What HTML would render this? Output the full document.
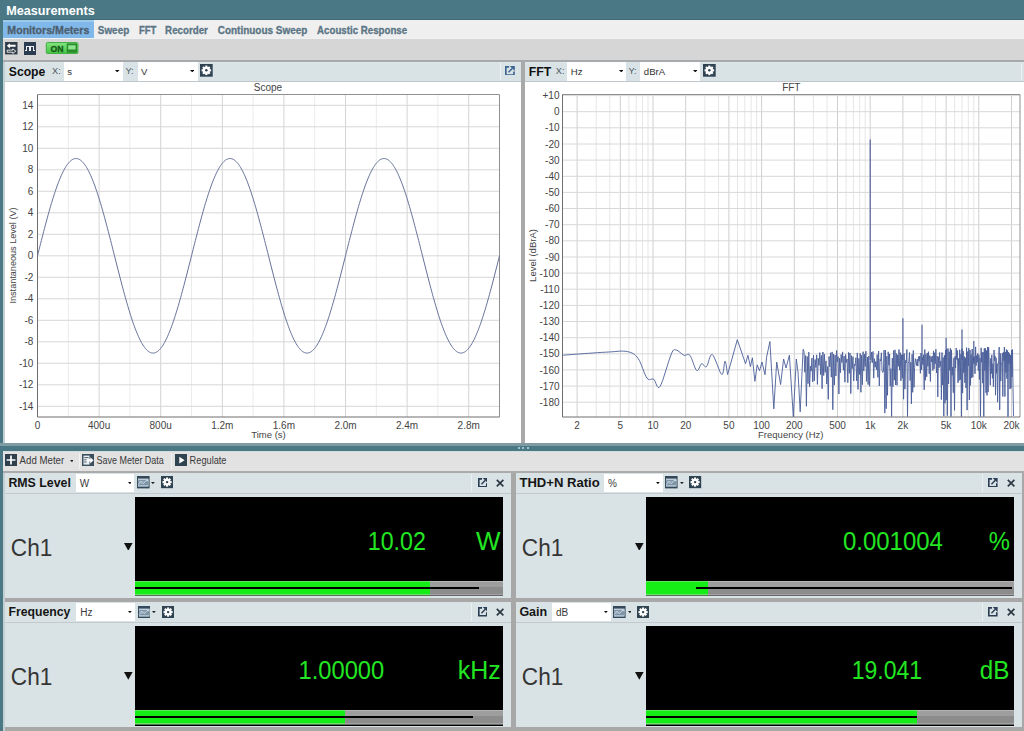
<!DOCTYPE html><html><head><meta charset="utf-8"><style>
*{margin:0;padding:0;box-sizing:border-box}
html,body{width:1024px;height:731px;overflow:hidden;background:#a8a8a8;font-family:"Liberation Sans",sans-serif}
.a{position:absolute}
svg text{font-family:"Liberation Sans",sans-serif}
</style></head><body>

<div class="a" style="left:0px;top:0px;width:1024px;height:20px;background:#4a7885"></div>
<div class="a" style="left:0px;top:18.8px;width:1024px;height:1px;background:#416a77"></div>
<div class="a" style="left:0px;top:0px;width:3px;height:731px;background:#4a7885"></div>
<div class="a" style="left:3px;top:20px;width:2px;height:711px;background:#c2cfd3"></div>
<div class="a" style="left:3px;top:20px;width:1021px;height:18px;background:#efefef"></div>
<div class="a" style="left:3px;top:20px;width:91px;height:18px;background:#80b9e9"></div>
<div class="a" style="left:3px;top:20px;width:91px;height:2px;background:#9ccaec"></div>
<div class="a" style="left:3px;top:37.6px;width:1021px;height:1.4px;background:#eef2f4"></div>
<div class="a" style="left:3px;top:39px;width:1021px;height:20.5px;background:#d6d6d6"></div>
<div class="a" style="left:3px;top:59.5px;width:1021px;height:2px;background:#a7aaad"></div>
<svg class="a" style="left:5.4px;top:42.4px" width="12.6" height="12.4" viewBox="0 0 13 13"><rect width="13" height="13" fill="#2f3c48"/>
<path d="M1.8 4 L5 1.3 V3 H11 V5 H5 V6.7 Z" fill="#fff"/><path d="M11.2 9.6 L8 7.2 V8.5 H2.2 V10.7 H8 V12 Z" fill="none" stroke="#fff" stroke-width="0.9"/></svg>
<svg class="a" style="left:24px;top:42px" width="12" height="13" viewBox="0 0 12 13" shape-rendering="crispEdges"><rect width="12" height="13" fill="#2c3d52"/>
<path d="M1 8.5 H2.5 V4.5 H5.5 V8.5 H6.5 V4.5 H9.5 V8.5 H11" fill="none" stroke="#f0f4f8" stroke-width="1"/></svg>
<svg class="a" style="left:45.3px;top:42.2px" width="34.2" height="12.1" viewBox="0 0 35 13"><defs><linearGradient id="gon" x1="0" y1="0" x2="0" y2="1"><stop offset="0" stop-color="#80e480"/><stop offset="1" stop-color="#46c446"/></linearGradient></defs>
<rect x="0.5" y="0.5" width="34" height="12" rx="1.5" fill="url(#gon)" stroke="#3aa83a"/>
<text x="5" y="10.4" font-weight="bold" font-size="9.8" fill="#175a17" stroke="#175a17" stroke-width="0.35" textLength="14" lengthAdjust="spacingAndGlyphs">ON</text>
<rect x="22.5" y="1.5" width="11" height="10" fill="#2a8c2a"/><rect x="24" y="3.5" width="8" height="4.5" fill="#8ee48e"/></svg>
<div class="a" style="left:5px;top:61.5px;width:515.5px;height:381.5px;background:#fff"></div>
<div class="a" style="left:5px;top:61.5px;width:515.5px;height:19.3px;background:#d9e3e5"></div>
<div class="a" style="left:5px;top:61.5px;width:515.5px;height:1px;background:#e0e7ea"></div>
<div class="a" style="left:5px;top:80.8px;width:515.5px;height:1.2px;background:#c0c6c9"></div>
<div class="a" style="left:63.7px;top:62px;width:59px;height:18.6px;background:#fff"></div>
<svg class="a" style="left:115.10000000000001px;top:70px" width="4.5" height="2.4" viewBox="0 0 4.5 2.4"><path d="M0 0H4.5L2.25 2.4Z" fill="#111"/></svg>
<div class="a" style="left:123.5px;top:62px;width:14px;height:18.6px;background:#d9e2e6"></div>
<div class="a" style="left:137.5px;top:62px;width:60px;height:18.6px;background:#fff"></div>
<svg class="a" style="left:189.9px;top:70px" width="4.5" height="2.4" viewBox="0 0 4.5 2.4"><path d="M0 0H4.5L2.25 2.4Z" fill="#111"/></svg>
<svg class="a" style="left:200.3px;top:64px" width="12.7" height="12.7" viewBox="0 0 12.7 12.7"><rect width="12.7" height="12.7" fill="#2f4351"/><rect x="5.28" y="1.56" width="2.15" height="9.57" fill="#fff" transform="rotate(0 6.35 6.35)"/><rect x="5.28" y="1.56" width="2.15" height="9.57" fill="#fff" transform="rotate(45 6.35 6.35)"/><rect x="5.28" y="1.56" width="2.15" height="9.57" fill="#fff" transform="rotate(90 6.35 6.35)"/><rect x="5.28" y="1.56" width="2.15" height="9.57" fill="#fff" transform="rotate(135 6.35 6.35)"/><circle cx="6.35" cy="6.35" r="3.61" fill="#fff"/><circle cx="6.35" cy="6.35" r="1.27" fill="#2f4351"/></svg>
<div class="a" style="left:500px;top:63px;width:1px;height:17px;background:#edf1f3"></div>
<svg class="a" style="left:505.3px;top:65.7px" width="9.8" height="9.8" viewBox="0 0 10 10"><path d="M4.2 0.85H0.85V9.15H9.15V5.6" fill="none" stroke="#3d6591" stroke-width="1.7"/><path d="M3.6 6.4L7.6 2.4" fill="none" stroke="#3d6591" stroke-width="1.5"/><path d="M4.9 0H10V5.1Z" fill="#3d6591"/></svg>
<div class="a" style="left:520.5px;top:61.5px;width:4.5px;height:381.5px;background:#a9a9a9"></div>
<div class="a" style="left:525px;top:61.5px;width:499px;height:381.5px;background:#fff"></div>
<div class="a" style="left:525px;top:61.5px;width:499px;height:19.3px;background:#d9e3e5"></div>
<div class="a" style="left:525px;top:61.5px;width:499px;height:1px;background:#e0e7ea"></div>
<div class="a" style="left:525px;top:80.8px;width:499px;height:1.2px;background:#c0c6c9"></div>
<div class="a" style="left:567.3px;top:62px;width:59px;height:18.6px;background:#fff"></div>
<svg class="a" style="left:618.6999999999999px;top:70px" width="4.5" height="2.4" viewBox="0 0 4.5 2.4"><path d="M0 0H4.5L2.25 2.4Z" fill="#111"/></svg>
<div class="a" style="left:626.3px;top:62px;width:14px;height:18.6px;background:#d9e2e6"></div>
<div class="a" style="left:640.3px;top:62px;width:60px;height:18.6px;background:#fff"></div>
<svg class="a" style="left:692.6999999999999px;top:70px" width="4.5" height="2.4" viewBox="0 0 4.5 2.4"><path d="M0 0H4.5L2.25 2.4Z" fill="#111"/></svg>
<svg class="a" style="left:703px;top:64px" width="12.7" height="12.7" viewBox="0 0 12.7 12.7"><rect width="12.7" height="12.7" fill="#2f4351"/><rect x="5.28" y="1.56" width="2.15" height="9.57" fill="#fff" transform="rotate(0 6.35 6.35)"/><rect x="5.28" y="1.56" width="2.15" height="9.57" fill="#fff" transform="rotate(45 6.35 6.35)"/><rect x="5.28" y="1.56" width="2.15" height="9.57" fill="#fff" transform="rotate(90 6.35 6.35)"/><rect x="5.28" y="1.56" width="2.15" height="9.57" fill="#fff" transform="rotate(135 6.35 6.35)"/><circle cx="6.35" cy="6.35" r="3.61" fill="#fff"/><circle cx="6.35" cy="6.35" r="1.27" fill="#2f4351"/></svg>
<div class="a" style="left:1020.5px;top:63px;width:1px;height:17px;background:#edf1f3"></div>
<svg class="a" style="left:0;top:0" width="1024" height="731" viewBox="0 0 1024 731">
<line x1="68.3" y1="94.5" x2="68.3" y2="417" stroke="#ececec" stroke-width="1"/>
<line x1="99.1" y1="94.5" x2="99.1" y2="417" stroke="#d4d4d4" stroke-width="1"/>
<line x1="129.9" y1="94.5" x2="129.9" y2="417" stroke="#ececec" stroke-width="1"/>
<line x1="160.7" y1="94.5" x2="160.7" y2="417" stroke="#d4d4d4" stroke-width="1"/>
<line x1="191.5" y1="94.5" x2="191.5" y2="417" stroke="#ececec" stroke-width="1"/>
<line x1="222.3" y1="94.5" x2="222.3" y2="417" stroke="#d4d4d4" stroke-width="1"/>
<line x1="253.1" y1="94.5" x2="253.1" y2="417" stroke="#ececec" stroke-width="1"/>
<line x1="283.9" y1="94.5" x2="283.9" y2="417" stroke="#d4d4d4" stroke-width="1"/>
<line x1="314.7" y1="94.5" x2="314.7" y2="417" stroke="#ececec" stroke-width="1"/>
<line x1="345.5" y1="94.5" x2="345.5" y2="417" stroke="#d4d4d4" stroke-width="1"/>
<line x1="376.3" y1="94.5" x2="376.3" y2="417" stroke="#ececec" stroke-width="1"/>
<line x1="407.1" y1="94.5" x2="407.1" y2="417" stroke="#d4d4d4" stroke-width="1"/>
<line x1="437.9" y1="94.5" x2="437.9" y2="417" stroke="#ececec" stroke-width="1"/>
<line x1="468.7" y1="94.5" x2="468.7" y2="417" stroke="#d4d4d4" stroke-width="1"/>
<line x1="37.5" y1="406.3" x2="499.5" y2="406.3" stroke="#d8d8d8" stroke-width="1"/>
<line x1="37.5" y1="384.8" x2="499.5" y2="384.8" stroke="#d8d8d8" stroke-width="1"/>
<line x1="37.5" y1="363.3" x2="499.5" y2="363.3" stroke="#d8d8d8" stroke-width="1"/>
<line x1="37.5" y1="341.8" x2="499.5" y2="341.8" stroke="#d8d8d8" stroke-width="1"/>
<line x1="37.5" y1="320.3" x2="499.5" y2="320.3" stroke="#d8d8d8" stroke-width="1"/>
<line x1="37.5" y1="298.8" x2="499.5" y2="298.8" stroke="#d8d8d8" stroke-width="1"/>
<line x1="37.5" y1="277.3" x2="499.5" y2="277.3" stroke="#d8d8d8" stroke-width="1"/>
<line x1="37.5" y1="255.8" x2="499.5" y2="255.8" stroke="#d8d8d8" stroke-width="1"/>
<line x1="37.5" y1="234.3" x2="499.5" y2="234.3" stroke="#d8d8d8" stroke-width="1"/>
<line x1="37.5" y1="212.8" x2="499.5" y2="212.8" stroke="#d8d8d8" stroke-width="1"/>
<line x1="37.5" y1="191.3" x2="499.5" y2="191.3" stroke="#d8d8d8" stroke-width="1"/>
<line x1="37.5" y1="169.8" x2="499.5" y2="169.8" stroke="#d8d8d8" stroke-width="1"/>
<line x1="37.5" y1="148.3" x2="499.5" y2="148.3" stroke="#d8d8d8" stroke-width="1"/>
<line x1="37.5" y1="126.8" x2="499.5" y2="126.8" stroke="#d8d8d8" stroke-width="1"/>
<line x1="37.5" y1="105.3" x2="499.5" y2="105.3" stroke="#d8d8d8" stroke-width="1"/>
<path d="M37.5 94.5H499.5V417" fill="none" stroke="#909090" stroke-width="1"/>
<path d="M37.5 94.5V417H499.5" fill="none" stroke="#6e6e6e" stroke-width="1"/>
<path d="M37.50 255.80 L38.27 252.74 L39.04 249.69 L39.81 246.64 L40.58 243.61 L41.35 240.58 L42.12 237.57 L42.89 234.58 L43.66 231.61 L44.43 228.66 L45.20 225.74 L45.97 222.85 L46.74 219.99 L47.51 217.16 L48.28 214.38 L49.05 211.63 L49.82 208.93 L50.59 206.28 L51.36 203.67 L52.13 201.12 L52.90 198.62 L53.67 196.17 L54.44 193.79 L55.21 191.46 L55.98 189.20 L56.75 187.01 L57.52 184.88 L58.29 182.82 L59.06 180.84 L59.83 178.93 L60.60 177.09 L61.37 175.34 L62.14 173.66 L62.91 172.06 L63.68 170.55 L64.45 169.12 L65.22 167.77 L65.99 166.51 L66.76 165.34 L67.53 164.26 L68.30 163.27 L69.07 162.38 L69.84 161.57 L70.61 160.86 L71.38 160.24 L72.15 159.71 L72.92 159.28 L73.69 158.94 L74.46 158.70 L75.23 158.56 L76.00 158.51 L76.77 158.56 L77.54 158.70 L78.31 158.94 L79.08 159.28 L79.85 159.71 L80.62 160.24 L81.39 160.86 L82.16 161.57 L82.93 162.38 L83.70 163.27 L84.47 164.26 L85.24 165.34 L86.01 166.51 L86.78 167.77 L87.55 169.12 L88.32 170.55 L89.09 172.06 L89.86 173.66 L90.63 175.34 L91.40 177.09 L92.17 178.93 L92.94 180.84 L93.71 182.82 L94.48 184.88 L95.25 187.01 L96.02 189.20 L96.79 191.46 L97.56 193.79 L98.33 196.17 L99.10 198.62 L99.87 201.12 L100.64 203.67 L101.41 206.28 L102.18 208.93 L102.95 211.63 L103.72 214.38 L104.49 217.16 L105.26 219.99 L106.03 222.85 L106.80 225.74 L107.57 228.66 L108.34 231.61 L109.11 234.58 L109.88 237.57 L110.65 240.58 L111.42 243.61 L112.19 246.64 L112.96 249.69 L113.73 252.74 L114.50 255.80 L115.27 258.86 L116.04 261.91 L116.81 264.96 L117.58 267.99 L118.35 271.02 L119.12 274.03 L119.89 277.02 L120.66 279.99 L121.43 282.94 L122.20 285.86 L122.97 288.75 L123.74 291.61 L124.51 294.44 L125.28 297.22 L126.05 299.97 L126.82 302.67 L127.59 305.32 L128.36 307.93 L129.13 310.48 L129.90 312.98 L130.67 315.43 L131.44 317.81 L132.21 320.14 L132.98 322.40 L133.75 324.59 L134.52 326.72 L135.29 328.78 L136.06 330.76 L136.83 332.67 L137.60 334.51 L138.37 336.26 L139.14 337.94 L139.91 339.54 L140.68 341.05 L141.45 342.48 L142.22 343.83 L142.99 345.09 L143.76 346.26 L144.53 347.34 L145.30 348.33 L146.07 349.22 L146.84 350.03 L147.61 350.74 L148.38 351.36 L149.15 351.89 L149.92 352.32 L150.69 352.66 L151.46 352.90 L152.23 353.04 L153.00 353.09 L153.77 353.04 L154.54 352.90 L155.31 352.66 L156.08 352.32 L156.85 351.89 L157.62 351.36 L158.39 350.74 L159.16 350.03 L159.93 349.22 L160.70 348.33 L161.47 347.34 L162.24 346.26 L163.01 345.09 L163.78 343.83 L164.55 342.48 L165.32 341.05 L166.09 339.54 L166.86 337.94 L167.63 336.26 L168.40 334.51 L169.17 332.67 L169.94 330.76 L170.71 328.78 L171.48 326.72 L172.25 324.59 L173.02 322.40 L173.79 320.14 L174.56 317.81 L175.33 315.43 L176.10 312.98 L176.87 310.48 L177.64 307.93 L178.41 305.32 L179.18 302.67 L179.95 299.97 L180.72 297.22 L181.49 294.44 L182.26 291.61 L183.03 288.75 L183.80 285.86 L184.57 282.94 L185.34 279.99 L186.11 277.02 L186.88 274.03 L187.65 271.02 L188.42 267.99 L189.19 264.96 L189.96 261.91 L190.73 258.86 L191.50 255.80 L192.27 252.74 L193.04 249.69 L193.81 246.64 L194.58 243.61 L195.35 240.58 L196.12 237.57 L196.89 234.58 L197.66 231.61 L198.43 228.66 L199.20 225.74 L199.97 222.85 L200.74 219.99 L201.51 217.16 L202.28 214.38 L203.05 211.63 L203.82 208.93 L204.59 206.28 L205.36 203.67 L206.13 201.12 L206.90 198.62 L207.67 196.17 L208.44 193.79 L209.21 191.46 L209.98 189.20 L210.75 187.01 L211.52 184.88 L212.29 182.82 L213.06 180.84 L213.83 178.93 L214.60 177.09 L215.37 175.34 L216.14 173.66 L216.91 172.06 L217.68 170.55 L218.45 169.12 L219.22 167.77 L219.99 166.51 L220.76 165.34 L221.53 164.26 L222.30 163.27 L223.07 162.38 L223.84 161.57 L224.61 160.86 L225.38 160.24 L226.15 159.71 L226.92 159.28 L227.69 158.94 L228.46 158.70 L229.23 158.56 L230.00 158.51 L230.77 158.56 L231.54 158.70 L232.31 158.94 L233.08 159.28 L233.85 159.71 L234.62 160.24 L235.39 160.86 L236.16 161.57 L236.93 162.38 L237.70 163.27 L238.47 164.26 L239.24 165.34 L240.01 166.51 L240.78 167.77 L241.55 169.12 L242.32 170.55 L243.09 172.06 L243.86 173.66 L244.63 175.34 L245.40 177.09 L246.17 178.93 L246.94 180.84 L247.71 182.82 L248.48 184.88 L249.25 187.01 L250.02 189.20 L250.79 191.46 L251.56 193.79 L252.33 196.17 L253.10 198.62 L253.87 201.12 L254.64 203.67 L255.41 206.28 L256.18 208.93 L256.95 211.63 L257.72 214.38 L258.49 217.16 L259.26 219.99 L260.03 222.85 L260.80 225.74 L261.57 228.66 L262.34 231.61 L263.11 234.58 L263.88 237.57 L264.65 240.58 L265.42 243.61 L266.19 246.64 L266.96 249.69 L267.73 252.74 L268.50 255.80 L269.27 258.86 L270.04 261.91 L270.81 264.96 L271.58 267.99 L272.35 271.02 L273.12 274.03 L273.89 277.02 L274.66 279.99 L275.43 282.94 L276.20 285.86 L276.97 288.75 L277.74 291.61 L278.51 294.44 L279.28 297.22 L280.05 299.97 L280.82 302.67 L281.59 305.32 L282.36 307.93 L283.13 310.48 L283.90 312.98 L284.67 315.43 L285.44 317.81 L286.21 320.14 L286.98 322.40 L287.75 324.59 L288.52 326.72 L289.29 328.78 L290.06 330.76 L290.83 332.67 L291.60 334.51 L292.37 336.26 L293.14 337.94 L293.91 339.54 L294.68 341.05 L295.45 342.48 L296.22 343.83 L296.99 345.09 L297.76 346.26 L298.53 347.34 L299.30 348.33 L300.07 349.22 L300.84 350.03 L301.61 350.74 L302.38 351.36 L303.15 351.89 L303.92 352.32 L304.69 352.66 L305.46 352.90 L306.23 353.04 L307.00 353.09 L307.77 353.04 L308.54 352.90 L309.31 352.66 L310.08 352.32 L310.85 351.89 L311.62 351.36 L312.39 350.74 L313.16 350.03 L313.93 349.22 L314.70 348.33 L315.47 347.34 L316.24 346.26 L317.01 345.09 L317.78 343.83 L318.55 342.48 L319.32 341.05 L320.09 339.54 L320.86 337.94 L321.63 336.26 L322.40 334.51 L323.17 332.67 L323.94 330.76 L324.71 328.78 L325.48 326.72 L326.25 324.59 L327.02 322.40 L327.79 320.14 L328.56 317.81 L329.33 315.43 L330.10 312.98 L330.87 310.48 L331.64 307.93 L332.41 305.32 L333.18 302.67 L333.95 299.97 L334.72 297.22 L335.49 294.44 L336.26 291.61 L337.03 288.75 L337.80 285.86 L338.57 282.94 L339.34 279.99 L340.11 277.02 L340.88 274.03 L341.65 271.02 L342.42 267.99 L343.19 264.96 L343.96 261.91 L344.73 258.86 L345.50 255.80 L346.27 252.74 L347.04 249.69 L347.81 246.64 L348.58 243.61 L349.35 240.58 L350.12 237.57 L350.89 234.58 L351.66 231.61 L352.43 228.66 L353.20 225.74 L353.97 222.85 L354.74 219.99 L355.51 217.16 L356.28 214.38 L357.05 211.63 L357.82 208.93 L358.59 206.28 L359.36 203.67 L360.13 201.12 L360.90 198.62 L361.67 196.17 L362.44 193.79 L363.21 191.46 L363.98 189.20 L364.75 187.01 L365.52 184.88 L366.29 182.82 L367.06 180.84 L367.83 178.93 L368.60 177.09 L369.37 175.34 L370.14 173.66 L370.91 172.06 L371.68 170.55 L372.45 169.12 L373.22 167.77 L373.99 166.51 L374.76 165.34 L375.53 164.26 L376.30 163.27 L377.07 162.38 L377.84 161.57 L378.61 160.86 L379.38 160.24 L380.15 159.71 L380.92 159.28 L381.69 158.94 L382.46 158.70 L383.23 158.56 L384.00 158.51 L384.77 158.56 L385.54 158.70 L386.31 158.94 L387.08 159.28 L387.85 159.71 L388.62 160.24 L389.39 160.86 L390.16 161.57 L390.93 162.38 L391.70 163.27 L392.47 164.26 L393.24 165.34 L394.01 166.51 L394.78 167.77 L395.55 169.12 L396.32 170.55 L397.09 172.06 L397.86 173.66 L398.63 175.34 L399.40 177.09 L400.17 178.93 L400.94 180.84 L401.71 182.82 L402.48 184.88 L403.25 187.01 L404.02 189.20 L404.79 191.46 L405.56 193.79 L406.33 196.17 L407.10 198.62 L407.87 201.12 L408.64 203.67 L409.41 206.28 L410.18 208.93 L410.95 211.63 L411.72 214.38 L412.49 217.16 L413.26 219.99 L414.03 222.85 L414.80 225.74 L415.57 228.66 L416.34 231.61 L417.11 234.58 L417.88 237.57 L418.65 240.58 L419.42 243.61 L420.19 246.64 L420.96 249.69 L421.73 252.74 L422.50 255.80 L423.27 258.86 L424.04 261.91 L424.81 264.96 L425.58 267.99 L426.35 271.02 L427.12 274.03 L427.89 277.02 L428.66 279.99 L429.43 282.94 L430.20 285.86 L430.97 288.75 L431.74 291.61 L432.51 294.44 L433.28 297.22 L434.05 299.97 L434.82 302.67 L435.59 305.32 L436.36 307.93 L437.13 310.48 L437.90 312.98 L438.67 315.43 L439.44 317.81 L440.21 320.14 L440.98 322.40 L441.75 324.59 L442.52 326.72 L443.29 328.78 L444.06 330.76 L444.83 332.67 L445.60 334.51 L446.37 336.26 L447.14 337.94 L447.91 339.54 L448.68 341.05 L449.45 342.48 L450.22 343.83 L450.99 345.09 L451.76 346.26 L452.53 347.34 L453.30 348.33 L454.07 349.22 L454.84 350.03 L455.61 350.74 L456.38 351.36 L457.15 351.89 L457.92 352.32 L458.69 352.66 L459.46 352.90 L460.23 353.04 L461.00 353.09 L461.77 353.04 L462.54 352.90 L463.31 352.66 L464.08 352.32 L464.85 351.89 L465.62 351.36 L466.39 350.74 L467.16 350.03 L467.93 349.22 L468.70 348.33 L469.47 347.34 L470.24 346.26 L471.01 345.09 L471.78 343.83 L472.55 342.48 L473.32 341.05 L474.09 339.54 L474.86 337.94 L475.63 336.26 L476.40 334.51 L477.17 332.67 L477.94 330.76 L478.71 328.78 L479.48 326.72 L480.25 324.59 L481.02 322.40 L481.79 320.14 L482.56 317.81 L483.33 315.43 L484.10 312.98 L484.87 310.48 L485.64 307.93 L486.41 305.32 L487.18 302.67 L487.95 299.97 L488.72 297.22 L489.49 294.44 L490.26 291.61 L491.03 288.75 L491.80 285.86 L492.57 282.94 L493.34 279.99 L494.11 277.02 L494.88 274.03 L495.65 271.02 L496.42 267.99 L497.19 264.96 L497.96 261.91 L498.73 258.86 L499.50 255.80" fill="none" stroke="#66729a" stroke-width="1"/>
<line x1="577.1" y1="94.5" x2="577.1" y2="417" stroke="#cfcfcf" stroke-width="1"/>
<line x1="596.2" y1="94.5" x2="596.2" y2="417" stroke="#e6e6e6" stroke-width="1"/>
<line x1="609.8" y1="94.5" x2="609.8" y2="417" stroke="#e6e6e6" stroke-width="1"/>
<line x1="620.3" y1="94.5" x2="620.3" y2="417" stroke="#cfcfcf" stroke-width="1"/>
<line x1="628.9" y1="94.5" x2="628.9" y2="417" stroke="#e6e6e6" stroke-width="1"/>
<line x1="636.2" y1="94.5" x2="636.2" y2="417" stroke="#e6e6e6" stroke-width="1"/>
<line x1="642.5" y1="94.5" x2="642.5" y2="417" stroke="#e6e6e6" stroke-width="1"/>
<line x1="648.0" y1="94.5" x2="648.0" y2="417" stroke="#e6e6e6" stroke-width="1"/>
<line x1="653.0" y1="94.5" x2="653.0" y2="417" stroke="#cfcfcf" stroke-width="1"/>
<line x1="685.7" y1="94.5" x2="685.7" y2="417" stroke="#cfcfcf" stroke-width="1"/>
<line x1="704.8" y1="94.5" x2="704.8" y2="417" stroke="#e6e6e6" stroke-width="1"/>
<line x1="718.4" y1="94.5" x2="718.4" y2="417" stroke="#e6e6e6" stroke-width="1"/>
<line x1="728.9" y1="94.5" x2="728.9" y2="417" stroke="#cfcfcf" stroke-width="1"/>
<line x1="737.5" y1="94.5" x2="737.5" y2="417" stroke="#e6e6e6" stroke-width="1"/>
<line x1="744.8" y1="94.5" x2="744.8" y2="417" stroke="#e6e6e6" stroke-width="1"/>
<line x1="751.1" y1="94.5" x2="751.1" y2="417" stroke="#e6e6e6" stroke-width="1"/>
<line x1="756.6" y1="94.5" x2="756.6" y2="417" stroke="#e6e6e6" stroke-width="1"/>
<line x1="761.6" y1="94.5" x2="761.6" y2="417" stroke="#cfcfcf" stroke-width="1"/>
<line x1="794.3" y1="94.5" x2="794.3" y2="417" stroke="#cfcfcf" stroke-width="1"/>
<line x1="813.4" y1="94.5" x2="813.4" y2="417" stroke="#e6e6e6" stroke-width="1"/>
<line x1="827.0" y1="94.5" x2="827.0" y2="417" stroke="#e6e6e6" stroke-width="1"/>
<line x1="837.5" y1="94.5" x2="837.5" y2="417" stroke="#cfcfcf" stroke-width="1"/>
<line x1="846.1" y1="94.5" x2="846.1" y2="417" stroke="#e6e6e6" stroke-width="1"/>
<line x1="853.4" y1="94.5" x2="853.4" y2="417" stroke="#e6e6e6" stroke-width="1"/>
<line x1="859.7" y1="94.5" x2="859.7" y2="417" stroke="#e6e6e6" stroke-width="1"/>
<line x1="865.2" y1="94.5" x2="865.2" y2="417" stroke="#e6e6e6" stroke-width="1"/>
<line x1="870.2" y1="94.5" x2="870.2" y2="417" stroke="#cfcfcf" stroke-width="1"/>
<line x1="902.9" y1="94.5" x2="902.9" y2="417" stroke="#cfcfcf" stroke-width="1"/>
<line x1="922.0" y1="94.5" x2="922.0" y2="417" stroke="#e6e6e6" stroke-width="1"/>
<line x1="935.6" y1="94.5" x2="935.6" y2="417" stroke="#e6e6e6" stroke-width="1"/>
<line x1="946.1" y1="94.5" x2="946.1" y2="417" stroke="#cfcfcf" stroke-width="1"/>
<line x1="954.7" y1="94.5" x2="954.7" y2="417" stroke="#e6e6e6" stroke-width="1"/>
<line x1="962.0" y1="94.5" x2="962.0" y2="417" stroke="#e6e6e6" stroke-width="1"/>
<line x1="968.3" y1="94.5" x2="968.3" y2="417" stroke="#e6e6e6" stroke-width="1"/>
<line x1="973.8" y1="94.5" x2="973.8" y2="417" stroke="#e6e6e6" stroke-width="1"/>
<line x1="978.8" y1="94.5" x2="978.8" y2="417" stroke="#cfcfcf" stroke-width="1"/>
<line x1="1011.5" y1="94.5" x2="1011.5" y2="417" stroke="#cfcfcf" stroke-width="1"/>
<line x1="1011.5" y1="94.5" x2="1011.5" y2="417" stroke="#cfcfcf" stroke-width="1"/>
<line x1="562.5" y1="95.6" x2="1020" y2="95.6" stroke="#d8d8d8" stroke-width="1"/>
<line x1="562.5" y1="111.7" x2="1020" y2="111.7" stroke="#d8d8d8" stroke-width="1"/>
<line x1="562.5" y1="127.8" x2="1020" y2="127.8" stroke="#d8d8d8" stroke-width="1"/>
<line x1="562.5" y1="144.0" x2="1020" y2="144.0" stroke="#d8d8d8" stroke-width="1"/>
<line x1="562.5" y1="160.1" x2="1020" y2="160.1" stroke="#d8d8d8" stroke-width="1"/>
<line x1="562.5" y1="176.3" x2="1020" y2="176.3" stroke="#d8d8d8" stroke-width="1"/>
<line x1="562.5" y1="192.4" x2="1020" y2="192.4" stroke="#d8d8d8" stroke-width="1"/>
<line x1="562.5" y1="208.5" x2="1020" y2="208.5" stroke="#d8d8d8" stroke-width="1"/>
<line x1="562.5" y1="224.7" x2="1020" y2="224.7" stroke="#d8d8d8" stroke-width="1"/>
<line x1="562.5" y1="240.8" x2="1020" y2="240.8" stroke="#d8d8d8" stroke-width="1"/>
<line x1="562.5" y1="257.0" x2="1020" y2="257.0" stroke="#d8d8d8" stroke-width="1"/>
<line x1="562.5" y1="273.1" x2="1020" y2="273.1" stroke="#d8d8d8" stroke-width="1"/>
<line x1="562.5" y1="289.2" x2="1020" y2="289.2" stroke="#d8d8d8" stroke-width="1"/>
<line x1="562.5" y1="305.4" x2="1020" y2="305.4" stroke="#d8d8d8" stroke-width="1"/>
<line x1="562.5" y1="321.5" x2="1020" y2="321.5" stroke="#d8d8d8" stroke-width="1"/>
<line x1="562.5" y1="337.7" x2="1020" y2="337.7" stroke="#d8d8d8" stroke-width="1"/>
<line x1="562.5" y1="353.8" x2="1020" y2="353.8" stroke="#d8d8d8" stroke-width="1"/>
<line x1="562.5" y1="369.9" x2="1020" y2="369.9" stroke="#d8d8d8" stroke-width="1"/>
<line x1="562.5" y1="386.1" x2="1020" y2="386.1" stroke="#d8d8d8" stroke-width="1"/>
<line x1="562.5" y1="402.2" x2="1020" y2="402.2" stroke="#d8d8d8" stroke-width="1"/>
<path d="M562.5 94.5H1020V417" fill="none" stroke="#909090" stroke-width="1"/>
<path d="M562.5 94.5V417H1020" fill="none" stroke="#6e6e6e" stroke-width="1"/>
<path d="M562.3 355.3 L563.4 355.2 L564.7 355.1 L566.2 355.0 L568.0 354.8 L570.0 354.7 L572.3 354.5 L574.8 354.3 L577.6 354.1 L580.8 353.9 L584.6 353.6 L588.7 353.3 L593.0 353.0 L597.3 352.7 L601.5 352.4 L605.4 352.2 L608.8 352.0 L611.8 351.8 L614.5 351.6 L617.0 351.4 L619.4 351.2 L621.6 351.1 L623.6 351.2 L625.5 351.3 L627.4 351.6 L629.1 352.0 L630.7 352.5 L632.1 353.1 L633.4 353.8 L634.6 354.6 L635.7 355.6 L636.9 356.9 L638.1 358.4 L639.3 360.4 L640.5 362.8 L641.6 365.6 L642.7 368.5 L643.8 371.4 L644.9 374.1 L645.9 376.3 L646.9 378.0 L647.9 379.0 L648.8 379.5 L649.6 379.6 L650.5 379.4 L651.3 379.2 L652.1 379.0 L652.9 379.0 L653.8 379.3 L654.5 380.2 L655.2 381.6 L655.9 383.4 L656.6 385.1 L657.3 386.5 L658.1 387.4 L659.0 387.6 L660.0 386.6 L661.2 384.2 L662.6 380.6 L664.1 376.0 L665.7 371.0 L667.3 365.9 L668.8 361.1 L670.2 357.0 L671.3 354.0 L672.2 352.1 L672.9 350.8 L673.5 350.0 L674.0 349.6 L674.4 349.6 L674.9 349.7 L675.5 349.9 L676.2 350.0 L677.0 350.3 L678.0 350.8 L679.0 351.5 L680.0 352.4 L681.1 353.3 L682.1 354.1 L683.1 354.8 L684.0 355.3 L684.8 355.4 L685.6 355.3 L686.3 355.0 L687.0 354.7 L687.7 354.4 L688.4 354.4 L689.1 354.6 L689.9 355.3 L690.7 356.6 L691.6 358.5 L692.5 360.9 L693.4 363.3 L694.2 365.7 L695.1 367.9 L695.9 369.5 L696.7 370.5 L697.4 370.6 L698.1 370.1 L698.7 369.1 L699.3 367.9 L699.8 366.5 L700.4 365.2 L701.0 364.2 L701.6 363.7 L702.2 363.7 L702.8 364.1 L703.4 364.7 L704.0 365.5 L704.6 366.2 L705.2 366.7 L705.8 366.9 L706.5 366.6 L707.2 365.6 L707.8 363.9 L708.5 361.8 L709.1 359.5 L709.8 357.3 L710.6 355.6 L711.4 354.6 L712.3 354.5 L713.3 355.7 L714.5 358.0 L715.8 361.1 L717.2 364.6 L718.5 368.0 L719.7 371.1 L720.8 373.4 L721.7 374.5 L722.4 374.2 L723.0 372.9 L723.4 370.8 L723.8 368.3 L724.1 365.7 L724.4 363.4 L724.7 361.8 L725.0 361.2 L725.4 361.7 L725.8 363.0 L726.1 364.8 L726.5 367.0 L726.8 369.3 L727.1 371.5 L727.4 373.3 L727.6 374.5 L737.3 339.7 L745.5 363.7 L747.9 355.3 L750.4 366.6 L752.4 357.8 L754.9 381.3 L757.2 364.9 L759.5 370.8 L762.0 362.0 L765.0 374.7 L766.6 357.1 L769.9 341.5 L773.8 408.9 L776.7 362.0 L780.6 384.5 L783.6 359.0 L786.0 368.0 L789.4 355.2 L793.3 416.7 L796.3 359.0 L798.0 372.0 L800.2 411.8 L803.1 349.3 L804.0 351.3 L804.8 372.3 L805.6 355.5 L806.4 406.3 L807.2 356.4 L808.0 383.7 L808.8 352.1 L809.6 386.9 L810.4 366.2 L811.2 371.1 L811.9 358.0 L812.7 381.9 L813.5 355.1 L814.3 380.9 L815.1 359.5 L815.9 367.5 L816.7 354.9 L817.4 384.4 L818.2 358.3 L819.0 365.4 L819.8 352.6 L820.6 374.6 L821.3 355.4 L822.1 388.7 L822.9 352.0 L823.7 375.5 L824.4 354.2 L825.2 372.4 L826.0 360.9 L826.7 384.0 L827.5 366.6 L828.3 399.3 L829.0 356.4 L829.8 366.8 L830.6 352.8 L831.3 377.2 L832.1 351.9 L832.8 409.7 L833.6 354.0 L834.4 385.1 L835.1 355.0 L835.9 376.0 L836.6 350.4 L837.4 362.0 L838.1 356.6 L838.9 394.0 L839.6 358.3 L840.4 372.7 L841.1 354.5 L841.9 362.5 L842.6 351.9 L843.4 370.3 L844.1 356.1 L844.9 382.2 L845.6 354.5 L846.3 362.4 L847.1 359.1 L847.8 382.6 L848.6 352.4 L849.3 373.3 L850.0 353.0 L850.8 393.6 L851.5 355.7 L852.2 368.6 L853.0 356.6 L853.7 380.9 L854.4 364.1 L855.1 365.5 L855.9 357.7 L856.6 380.9 L857.3 352.9 L858.0 389.4 L858.8 358.4 L859.5 374.4 L860.2 353.3 L860.9 392.3 L861.6 355.2 L862.4 384.7 L863.1 351.7 L863.8 371.0 L864.5 354.1 L865.2 366.5 L865.9 351.2 L866.6 381.4 L867.4 357.0 L868.1 384.6 L868.8 355.9 L869.5 386.3 L870.2 361.8 L870.9 362.3 L871.6 352.2 L872.3 362.7 L873.0 351.5 L873.7 378.1 L874.4 358.7 L875.1 367.2 L875.8 361.5 L876.5 369.8 L877.2 354.6 L877.9 377.4 L878.6 351.0 L879.3 386.0 L880.0 359.4 L880.7 360.9 L881.4 352.8 L882.0 370.3 L882.7 372.4 L883.4 371.7 L884.1 350.1 L884.8 413.1 L885.5 350.2 L886.2 408.7 L886.8 356.1 L887.5 395.3 L888.2 351.8 L888.9 365.2 L889.6 354.0 L890.2 386.1 L890.9 368.7 L891.6 416.5 L892.3 358.2 L892.9 386.7 L893.6 350.6 L894.3 380.2 L895.0 349.8 L895.6 385.0 L896.3 353.5 L897.0 385.3 L897.6 354.8 L898.3 366.4 L899.0 349.5 L899.6 370.1 L900.3 352.6 L900.9 380.9 L901.6 354.7 L902.3 378.3 L902.9 354.7 L903.6 399.2 L904.2 353.5 L904.9 389.1 L905.6 360.4 L906.2 363.0 L906.9 349.5 L907.5 416.5 L908.2 363.1 L908.8 361.8 L909.5 352.4 L910.1 380.6 L910.8 362.2 L911.4 403.9 L912.1 354.3 L912.7 392.3 L913.3 350.5 L914.0 387.3 L914.6 367.5 L915.3 358.6 L915.9 361.4 L916.6 365.6 L917.2 359.1 L917.8 366.1 L918.5 356.7 L919.1 361.2 L919.7 356.0 L920.4 373.3 L921.0 353.0 L921.6 369.8 L922.3 357.5 L922.9 364.6 L923.5 354.8 L924.2 389.8 L924.8 349.5 L925.4 380.3 L926.0 354.4 L926.7 376.8 L927.3 352.9 L927.9 366.3 L928.5 351.7 L929.2 373.8 L929.8 355.6 L930.4 381.5 L931.0 356.6 L931.6 361.8 L932.3 356.1 L932.9 370.5 L933.5 350.9 L934.1 368.9 L934.7 352.7 L935.3 363.7 L935.9 349.2 L936.5 373.0 L937.2 356.0 L937.8 396.9 L938.4 356.8 L939.0 367.8 L939.6 352.4 L940.2 366.3 L940.8 361.0 L941.4 399.7 L942.0 352.5 L942.6 385.0 L943.2 357.6 L943.8 416.1 L944.4 355.3 L945.0 403.2 L945.6 350.2 L946.2 400.0 L946.8 348.8 L947.4 415.6 L948.0 348.5 L948.6 383.9 L949.2 351.8 L949.8 370.3 L950.4 348.3 L951.0 416.5 L951.5 349.9 L952.1 375.3 L952.7 367.0 L953.3 392.7 L953.9 357.8 L954.5 410.3 L955.1 356.3 L955.6 368.1 L956.2 348.1 L956.8 359.6 L957.4 350.5 L958.0 382.9 L958.6 358.4 L959.1 380.5 L959.7 349.8 L960.3 379.6 L960.9 354.0 L961.4 416.5 L962.0 348.7 L962.6 393.1 L963.2 351.2 L963.7 372.7 L964.3 356.5 L964.9 382.8 L965.4 357.7 L966.0 388.0 L966.6 347.7 L967.1 410.1 L967.7 351.6 L968.3 365.8 L968.8 348.2 L969.4 400.0 L970.0 350.0 L970.5 385.3 L971.1 354.6 L971.7 377.9 L972.2 349.0 L972.8 377.2 L973.3 357.7 L973.9 363.5 L974.4 356.5 L975.0 373.8 L975.6 346.9 L976.1 365.7 L976.7 355.5 L977.2 362.3 L977.8 353.5 L978.3 370.6 L978.9 354.8 L979.4 379.5 L980.0 357.9 L980.5 416.5 L981.1 347.8 L981.6 362.2 L982.2 352.4 L982.7 383.2 L983.2 352.1 L983.8 416.5 L984.3 348.3 L984.9 370.7 L985.4 348.3 L986.0 392.7 L986.5 350.6 L987.0 395.4 L987.6 347.0 L988.1 392.1 L988.6 347.3 L989.2 359.9 L989.7 360.4 L990.3 385.2 L990.8 358.3 L991.3 373.6 L991.8 354.8 L992.4 378.3 L992.9 363.7 L993.4 386.7 L994.0 350.0 L994.5 360.8 L995.0 355.8 L995.5 395.2 L996.1 357.7 L996.6 373.3 L997.1 363.6 L997.6 402.2 L998.2 365.9 L998.7 360.9 L999.2 347.1 L999.7 409.9 L1000.3 353.5 L1000.8 381.1 L1001.3 363.6 L1001.8 364.2 L1002.3 353.1 L1002.8 396.5 L1003.4 352.3 L1003.9 360.7 L1004.4 347.0 L1004.9 396.6 L1005.4 352.1 L1005.9 372.6 L1006.4 349.5 L1006.9 378.7 L1007.5 350.5 L1008.0 416.5 L1008.5 352.1 L1009.0 363.5 L1009.5 353.6 L1010.0 389.1 L1010.5 355.0 L1011.0 388.1 L1011.5 350.1 L1012.0 376.9 L1012.5 349.5 L1013.0 387.3 L1013.5 416" fill="none" stroke="#4a5d99" stroke-width="0.9" stroke-linejoin="round"/>
<line x1="870.2" y1="139.6" x2="870.2" y2="360" stroke="#4a5d99" stroke-width="1.15"/>
<line x1="902.9" y1="318.3" x2="902.9" y2="360" stroke="#4a5d99" stroke-width="1.15"/>
<line x1="922.0" y1="324.7" x2="922.0" y2="360" stroke="#4a5d99" stroke-width="1.15"/>
<line x1="946.1" y1="337.7" x2="946.1" y2="360" stroke="#4a5d99" stroke-width="1.15"/>
<line x1="962.0" y1="329.6" x2="962.0" y2="360" stroke="#4a5d99" stroke-width="1.15"/>
<line x1="973.8" y1="340.9" x2="973.8" y2="360" stroke="#4a5d99" stroke-width="1.15"/>
</svg>
<div class="a" style="left:0px;top:443px;width:1024px;height:3px;background:#7f9ba3"></div>
<div class="a" style="left:0px;top:446px;width:1024px;height:4.6px;background:#4a7885"></div>
<div class="a" style="left:517.5px;top:447.2px;width:2px;height:2px;background:#9cc4d2"></div>
<div class="a" style="left:522px;top:447.2px;width:2px;height:2px;background:#9cc4d2"></div>
<div class="a" style="left:526.8px;top:447.2px;width:2px;height:2px;background:#9cc4d2"></div>
<div class="a" style="left:3px;top:450.6px;width:1021px;height:20.4px;background:#e2e2e2"></div>
<div class="a" style="left:3px;top:450.6px;width:1021px;height:1.2px;background:#d3dde0"></div>
<svg class="a" style="left:4.8px;top:454.4px" width="12" height="12" viewBox="0 0 12 12"><rect width="12" height="12" fill="#2f3f4c"/><path d="M6 1.6V10.4M1.6 6H10.4" stroke="#fff" stroke-width="1.7"/></svg>
<svg class="a" style="left:69.6px;top:459.8px" width="3.8" height="2.2" viewBox="0 0 4 2.2"><path d="M0 0H4L2 2.2Z" fill="#222"/></svg>
<div class="a" style="left:79px;top:453px;width:1px;height:16px;background:#f2f2f2"></div>
<svg class="a" style="left:82px;top:454.2px" width="12.3" height="12.3" viewBox="0 0 12.3 12.3"><rect width="12.3" height="12.3" fill="#3a4e5c"/><rect x="1.5" y="1.6" width="6" height="9" fill="#e8eef2"/><path d="M2.2 3.6H6.6M2.2 5.8H4.5M2.2 8H4.5" stroke="#3a4e5c" stroke-width="0.9"/><path d="M5 5.2H8.3V3.2L11.5 6.3L8.3 9.4V7.4H5Z" fill="#fff"/></svg>
<div class="a" style="left:171.3px;top:453px;width:1px;height:16px;background:#f2f2f2"></div>
<svg class="a" style="left:175.1px;top:454.2px" width="12.3" height="12.3" viewBox="0 0 12.3 12.3"><rect width="12.3" height="12.3" fill="#2f4351"/><path d="M4.3 2.8V9.6L9.6 6.2Z" fill="#fff"/></svg>
<div class="a" style="left:3px;top:471px;width:1021px;height:1.5px;background:#ababab"></div>
<div class="a" style="left:5px;top:472.5px;width:506px;height:20px;background:#d9e3e5"></div>
<div class="a" style="left:5px;top:492.5px;width:506px;height:1px;background:#c3c9cc"></div>
<div class="a" style="left:5px;top:493.5px;width:506px;height:104px;background:#d9e3e5"></div>
<div class="a" style="left:471px;top:474.0px;width:1px;height:17.5px;background:#eaf0f2"></div>
<div class="a" style="left:75.7px;top:473.7px;width:58.5px;height:18px;background:#fff"></div>
<svg class="a" style="left:127.7px;top:482.0px" width="3.8" height="2.2" viewBox="0 0 4 2.2"><path d="M0 0H4L2 2.2Z" fill="#111"/></svg>
<svg class="a" style="left:137.0px;top:476.4px" width="12.6" height="12.4" viewBox="0 0 12.6 12.4"><rect width="12.6" height="12.4" fill="#34495a"/><rect x="1" y="2.6" width="10.6" height="8" fill="#cddce8"/><rect x="1" y="3.8" width="10.6" height="5.6" fill="#7f95a8"/><path d="M1.2 8.6L4 5.2L6.3 7.6L9 4.6L11.4 4.6" fill="none" stroke="#d8e4ee" stroke-width="0.9"/><path d="M1.2 4.6L4 7.6L6.5 5.2" fill="none" stroke="#b8c8d6" stroke-width="0.7"/></svg>
<svg class="a" style="left:151.4px;top:481.9px" width="3.8" height="2.2" viewBox="0 0 4 2.2"><path d="M0 0H4L2 2.2Z" fill="#222"/></svg>
<svg class="a" style="left:161.0px;top:476.4px" width="12.2" height="12.2" viewBox="0 0 12.2 12.2"><rect width="12.2" height="12.2" fill="#2f4351"/><rect x="5.07" y="1.50" width="2.06" height="9.20" fill="#fff" transform="rotate(0 6.10 6.10)"/><rect x="5.07" y="1.50" width="2.06" height="9.20" fill="#fff" transform="rotate(45 6.10 6.10)"/><rect x="5.07" y="1.50" width="2.06" height="9.20" fill="#fff" transform="rotate(90 6.10 6.10)"/><rect x="5.07" y="1.50" width="2.06" height="9.20" fill="#fff" transform="rotate(135 6.10 6.10)"/><circle cx="6.10" cy="6.10" r="3.47" fill="#fff"/><circle cx="6.10" cy="6.10" r="1.22" fill="#2f4351"/></svg>
<svg class="a" style="left:477.5px;top:477.9px" width="9.6" height="9.6" viewBox="0 0 10 10"><path d="M4.2 0.85H0.85V9.15H9.15V5.6" fill="none" stroke="#2c3e55" stroke-width="1.7"/><path d="M3.6 6.4L7.6 2.4" fill="none" stroke="#2c3e55" stroke-width="1.5"/><path d="M4.9 0H10V5.1Z" fill="#2c3e55"/></svg>
<svg class="a" style="left:496.3px;top:478.5px" width="8.2" height="8.2" viewBox="0 0 8.2 8.2"><path d="M0.8 0.8L7.4 7.4M7.4 0.8L0.8 7.4" stroke="#2b3742" stroke-width="1.7"/></svg>
<svg class="a" style="left:124.2px;top:542.7px" width="8.6" height="7.8" viewBox="0 0 8.6 7.8"><path d="M0 0H8.6L4.3 7.8Z" fill="#111"/></svg>
<div class="a" style="left:134.7px;top:496.9px;width:368.7px;height:99.5px;background:#000"></div>
<div class="a" style="left:134.7px;top:581.0px;width:368.7px;height:14px;background:#8c8c8c"></div>
<div class="a" style="left:134.7px;top:581.0px;width:368.7px;height:5.6px;background:#9e9e9e"></div>
<div class="a" style="left:134.7px;top:581.0px;width:368.7px;height:1px;background:#b4b4b4"></div>
<div class="a" style="left:134.7px;top:593.7px;width:368.7px;height:1px;background:#a2a2a2"></div>
<div class="a" style="left:134.7px;top:594.8px;width:368.7px;height:1.2px;background:#676767"></div>
<div class="a" style="left:134.7px;top:581.0px;width:295.3px;height:13.7px;background:#16ec16"></div>
<div class="a" style="left:134.7px;top:581.0px;width:295.3px;height:1px;background:#5ee85e"></div>
<div class="a" style="left:134.7px;top:593.7px;width:295.3px;height:1px;background:#6ee06e"></div>
<div class="a" style="left:134.7px;top:594.8px;width:295.3px;height:1.2px;background:#4d7a4d"></div>
<div class="a" style="left:135px;top:586.6px;width:344px;height:2.4px;background:#000"></div>
<div class="a" style="left:516px;top:472.5px;width:505.5px;height:20px;background:#d9e3e5"></div>
<div class="a" style="left:516px;top:492.5px;width:505.5px;height:1px;background:#c3c9cc"></div>
<div class="a" style="left:516px;top:493.5px;width:505.5px;height:104px;background:#d9e3e5"></div>
<div class="a" style="left:981.5px;top:474.0px;width:1px;height:17.5px;background:#eaf0f2"></div>
<div class="a" style="left:604.1px;top:473.7px;width:58.5px;height:18px;background:#fff"></div>
<svg class="a" style="left:656.1px;top:482.0px" width="3.8" height="2.2" viewBox="0 0 4 2.2"><path d="M0 0H4L2 2.2Z" fill="#111"/></svg>
<svg class="a" style="left:665.4px;top:476.4px" width="12.6" height="12.4" viewBox="0 0 12.6 12.4"><rect width="12.6" height="12.4" fill="#34495a"/><rect x="1" y="2.6" width="10.6" height="8" fill="#cddce8"/><rect x="1" y="3.8" width="10.6" height="5.6" fill="#7f95a8"/><path d="M1.2 8.6L4 5.2L6.3 7.6L9 4.6L11.4 4.6" fill="none" stroke="#d8e4ee" stroke-width="0.9"/><path d="M1.2 4.6L4 7.6L6.5 5.2" fill="none" stroke="#b8c8d6" stroke-width="0.7"/></svg>
<svg class="a" style="left:679.8px;top:481.9px" width="3.8" height="2.2" viewBox="0 0 4 2.2"><path d="M0 0H4L2 2.2Z" fill="#222"/></svg>
<svg class="a" style="left:689.4px;top:476.4px" width="12.2" height="12.2" viewBox="0 0 12.2 12.2"><rect width="12.2" height="12.2" fill="#2f4351"/><rect x="5.07" y="1.50" width="2.06" height="9.20" fill="#fff" transform="rotate(0 6.10 6.10)"/><rect x="5.07" y="1.50" width="2.06" height="9.20" fill="#fff" transform="rotate(45 6.10 6.10)"/><rect x="5.07" y="1.50" width="2.06" height="9.20" fill="#fff" transform="rotate(90 6.10 6.10)"/><rect x="5.07" y="1.50" width="2.06" height="9.20" fill="#fff" transform="rotate(135 6.10 6.10)"/><circle cx="6.10" cy="6.10" r="3.47" fill="#fff"/><circle cx="6.10" cy="6.10" r="1.22" fill="#2f4351"/></svg>
<svg class="a" style="left:988.0px;top:477.9px" width="9.6" height="9.6" viewBox="0 0 10 10"><path d="M4.2 0.85H0.85V9.15H9.15V5.6" fill="none" stroke="#2c3e55" stroke-width="1.7"/><path d="M3.6 6.4L7.6 2.4" fill="none" stroke="#2c3e55" stroke-width="1.5"/><path d="M4.9 0H10V5.1Z" fill="#2c3e55"/></svg>
<svg class="a" style="left:1006.8px;top:478.5px" width="8.2" height="8.2" viewBox="0 0 8.2 8.2"><path d="M0.8 0.8L7.4 7.4M7.4 0.8L0.8 7.4" stroke="#2b3742" stroke-width="1.7"/></svg>
<svg class="a" style="left:635.2px;top:542.7px" width="8.6" height="7.8" viewBox="0 0 8.6 7.8"><path d="M0 0H8.6L4.3 7.8Z" fill="#111"/></svg>
<div class="a" style="left:645.7px;top:496.9px;width:368.19999999999993px;height:99.5px;background:#000"></div>
<div class="a" style="left:645.7px;top:581.0px;width:368.19999999999993px;height:14px;background:#8c8c8c"></div>
<div class="a" style="left:645.7px;top:581.0px;width:368.19999999999993px;height:5.6px;background:#9e9e9e"></div>
<div class="a" style="left:645.7px;top:581.0px;width:368.19999999999993px;height:1px;background:#b4b4b4"></div>
<div class="a" style="left:645.7px;top:593.7px;width:368.19999999999993px;height:1px;background:#a2a2a2"></div>
<div class="a" style="left:645.7px;top:594.8px;width:368.19999999999993px;height:1.2px;background:#676767"></div>
<div class="a" style="left:645.7px;top:581.0px;width:62.299999999999955px;height:13.7px;background:#16ec16"></div>
<div class="a" style="left:645.7px;top:581.0px;width:62.299999999999955px;height:1px;background:#5ee85e"></div>
<div class="a" style="left:645.7px;top:593.7px;width:62.299999999999955px;height:1px;background:#6ee06e"></div>
<div class="a" style="left:645.7px;top:594.8px;width:62.299999999999955px;height:1.2px;background:#4d7a4d"></div>
<div class="a" style="left:696px;top:586.6px;width:316px;height:2.4px;background:#000"></div>
<div class="a" style="left:5px;top:601.7px;width:506px;height:20px;background:#d9e3e5"></div>
<div class="a" style="left:5px;top:621.7px;width:506px;height:1px;background:#c3c9cc"></div>
<div class="a" style="left:5px;top:622.7px;width:506px;height:104px;background:#d9e3e5"></div>
<div class="a" style="left:471px;top:603.2px;width:1px;height:17.5px;background:#eaf0f2"></div>
<div class="a" style="left:76.3px;top:602.9000000000001px;width:58.5px;height:18px;background:#fff"></div>
<svg class="a" style="left:128.3px;top:611.2px" width="3.8" height="2.2" viewBox="0 0 4 2.2"><path d="M0 0H4L2 2.2Z" fill="#111"/></svg>
<svg class="a" style="left:137.6px;top:605.6px" width="12.6" height="12.4" viewBox="0 0 12.6 12.4"><rect width="12.6" height="12.4" fill="#34495a"/><rect x="1" y="2.6" width="10.6" height="8" fill="#cddce8"/><rect x="1" y="3.8" width="10.6" height="5.6" fill="#7f95a8"/><path d="M1.2 8.6L4 5.2L6.3 7.6L9 4.6L11.4 4.6" fill="none" stroke="#d8e4ee" stroke-width="0.9"/><path d="M1.2 4.6L4 7.6L6.5 5.2" fill="none" stroke="#b8c8d6" stroke-width="0.7"/></svg>
<svg class="a" style="left:152.0px;top:611.1px" width="3.8" height="2.2" viewBox="0 0 4 2.2"><path d="M0 0H4L2 2.2Z" fill="#222"/></svg>
<svg class="a" style="left:161.6px;top:605.6px" width="12.2" height="12.2" viewBox="0 0 12.2 12.2"><rect width="12.2" height="12.2" fill="#2f4351"/><rect x="5.07" y="1.50" width="2.06" height="9.20" fill="#fff" transform="rotate(0 6.10 6.10)"/><rect x="5.07" y="1.50" width="2.06" height="9.20" fill="#fff" transform="rotate(45 6.10 6.10)"/><rect x="5.07" y="1.50" width="2.06" height="9.20" fill="#fff" transform="rotate(90 6.10 6.10)"/><rect x="5.07" y="1.50" width="2.06" height="9.20" fill="#fff" transform="rotate(135 6.10 6.10)"/><circle cx="6.10" cy="6.10" r="3.47" fill="#fff"/><circle cx="6.10" cy="6.10" r="1.22" fill="#2f4351"/></svg>
<svg class="a" style="left:477.5px;top:607.1px" width="9.6" height="9.6" viewBox="0 0 10 10"><path d="M4.2 0.85H0.85V9.15H9.15V5.6" fill="none" stroke="#2c3e55" stroke-width="1.7"/><path d="M3.6 6.4L7.6 2.4" fill="none" stroke="#2c3e55" stroke-width="1.5"/><path d="M4.9 0H10V5.1Z" fill="#2c3e55"/></svg>
<svg class="a" style="left:496.3px;top:607.7px" width="8.2" height="8.2" viewBox="0 0 8.2 8.2"><path d="M0.8 0.8L7.4 7.4M7.4 0.8L0.8 7.4" stroke="#2b3742" stroke-width="1.7"/></svg>
<svg class="a" style="left:124.2px;top:671.9000000000001px" width="8.6" height="7.8" viewBox="0 0 8.6 7.8"><path d="M0 0H8.6L4.3 7.8Z" fill="#111"/></svg>
<div class="a" style="left:134.7px;top:626.1px;width:368.7px;height:99.5px;background:#000"></div>
<div class="a" style="left:134.7px;top:710.2px;width:368.7px;height:14px;background:#8c8c8c"></div>
<div class="a" style="left:134.7px;top:710.2px;width:368.7px;height:5.6px;background:#9e9e9e"></div>
<div class="a" style="left:134.7px;top:710.2px;width:368.7px;height:1px;background:#b4b4b4"></div>
<div class="a" style="left:134.7px;top:722.9000000000001px;width:368.7px;height:1px;background:#a2a2a2"></div>
<div class="a" style="left:134.7px;top:724.0px;width:368.7px;height:1.2px;background:#676767"></div>
<div class="a" style="left:134.7px;top:710.2px;width:210.3px;height:13.7px;background:#16ec16"></div>
<div class="a" style="left:134.7px;top:710.2px;width:210.3px;height:1px;background:#5ee85e"></div>
<div class="a" style="left:134.7px;top:722.9000000000001px;width:210.3px;height:1px;background:#6ee06e"></div>
<div class="a" style="left:134.7px;top:724.0px;width:210.3px;height:1.2px;background:#4d7a4d"></div>
<div class="a" style="left:135px;top:715.8000000000001px;width:337.7px;height:2.4px;background:#000"></div>
<div class="a" style="left:516px;top:601.7px;width:505.5px;height:20px;background:#d9e3e5"></div>
<div class="a" style="left:516px;top:621.7px;width:505.5px;height:1px;background:#c3c9cc"></div>
<div class="a" style="left:516px;top:622.7px;width:505.5px;height:104px;background:#d9e3e5"></div>
<div class="a" style="left:981.5px;top:603.2px;width:1px;height:17.5px;background:#eaf0f2"></div>
<div class="a" style="left:552px;top:602.9000000000001px;width:58.5px;height:18px;background:#fff"></div>
<svg class="a" style="left:604px;top:611.2px" width="3.8" height="2.2" viewBox="0 0 4 2.2"><path d="M0 0H4L2 2.2Z" fill="#111"/></svg>
<svg class="a" style="left:613.3px;top:605.6px" width="12.6" height="12.4" viewBox="0 0 12.6 12.4"><rect width="12.6" height="12.4" fill="#34495a"/><rect x="1" y="2.6" width="10.6" height="8" fill="#cddce8"/><rect x="1" y="3.8" width="10.6" height="5.6" fill="#7f95a8"/><path d="M1.2 8.6L4 5.2L6.3 7.6L9 4.6L11.4 4.6" fill="none" stroke="#d8e4ee" stroke-width="0.9"/><path d="M1.2 4.6L4 7.6L6.5 5.2" fill="none" stroke="#b8c8d6" stroke-width="0.7"/></svg>
<svg class="a" style="left:627.6999999999999px;top:611.1px" width="3.8" height="2.2" viewBox="0 0 4 2.2"><path d="M0 0H4L2 2.2Z" fill="#222"/></svg>
<svg class="a" style="left:637.3px;top:605.6px" width="12.2" height="12.2" viewBox="0 0 12.2 12.2"><rect width="12.2" height="12.2" fill="#2f4351"/><rect x="5.07" y="1.50" width="2.06" height="9.20" fill="#fff" transform="rotate(0 6.10 6.10)"/><rect x="5.07" y="1.50" width="2.06" height="9.20" fill="#fff" transform="rotate(45 6.10 6.10)"/><rect x="5.07" y="1.50" width="2.06" height="9.20" fill="#fff" transform="rotate(90 6.10 6.10)"/><rect x="5.07" y="1.50" width="2.06" height="9.20" fill="#fff" transform="rotate(135 6.10 6.10)"/><circle cx="6.10" cy="6.10" r="3.47" fill="#fff"/><circle cx="6.10" cy="6.10" r="1.22" fill="#2f4351"/></svg>
<svg class="a" style="left:988.0px;top:607.1px" width="9.6" height="9.6" viewBox="0 0 10 10"><path d="M4.2 0.85H0.85V9.15H9.15V5.6" fill="none" stroke="#2c3e55" stroke-width="1.7"/><path d="M3.6 6.4L7.6 2.4" fill="none" stroke="#2c3e55" stroke-width="1.5"/><path d="M4.9 0H10V5.1Z" fill="#2c3e55"/></svg>
<svg class="a" style="left:1006.8px;top:607.7px" width="8.2" height="8.2" viewBox="0 0 8.2 8.2"><path d="M0.8 0.8L7.4 7.4M7.4 0.8L0.8 7.4" stroke="#2b3742" stroke-width="1.7"/></svg>
<svg class="a" style="left:635.2px;top:671.9000000000001px" width="8.6" height="7.8" viewBox="0 0 8.6 7.8"><path d="M0 0H8.6L4.3 7.8Z" fill="#111"/></svg>
<div class="a" style="left:645.7px;top:626.1px;width:368.19999999999993px;height:99.5px;background:#000"></div>
<div class="a" style="left:645.7px;top:710.2px;width:368.19999999999993px;height:14px;background:#8c8c8c"></div>
<div class="a" style="left:645.7px;top:710.2px;width:368.19999999999993px;height:5.6px;background:#9e9e9e"></div>
<div class="a" style="left:645.7px;top:710.2px;width:368.19999999999993px;height:1px;background:#b4b4b4"></div>
<div class="a" style="left:645.7px;top:722.9000000000001px;width:368.19999999999993px;height:1px;background:#a2a2a2"></div>
<div class="a" style="left:645.7px;top:724.0px;width:368.19999999999993px;height:1.2px;background:#676767"></div>
<div class="a" style="left:645.7px;top:710.2px;width:271.29999999999995px;height:13.7px;background:#16ec16"></div>
<div class="a" style="left:645.7px;top:710.2px;width:271.29999999999995px;height:1px;background:#5ee85e"></div>
<div class="a" style="left:645.7px;top:722.9000000000001px;width:271.29999999999995px;height:1px;background:#6ee06e"></div>
<div class="a" style="left:645.7px;top:724.0px;width:271.29999999999995px;height:1.2px;background:#4d7a4d"></div>
<div class="a" style="left:645.7px;top:715.8000000000001px;width:271.29999999999995px;height:2.4px;background:#000"></div>
<svg class="a" style="left:0;top:0" width="1024" height="731" viewBox="0 0 1024 731"><text x="6.2" y="14.8" font-size="12" font-weight="bold" fill="#fff" text-anchor="start" textLength="88.5" lengthAdjust="spacingAndGlyphs">Measurements</text>
<text x="7.300000000000001" y="33.5" font-size="10" font-weight="bold" fill="#4d5e6e" text-anchor="start" textLength="82" lengthAdjust="spacingAndGlyphs" stroke="#4d5e6e" stroke-width="0.3">Monitors/Meters</text>
<text x="97.80000000000001" y="33.5" font-size="10" font-weight="bold" fill="#5b7585" text-anchor="start" textLength="31.4" lengthAdjust="spacingAndGlyphs" stroke="#5b7585" stroke-width="0.3">Sweep</text>
<text x="138.9" y="33.5" font-size="10" font-weight="bold" fill="#5b7585" text-anchor="start" textLength="17.4" lengthAdjust="spacingAndGlyphs" stroke="#5b7585" stroke-width="0.3">FFT</text>
<text x="165.1" y="33.5" font-size="10" font-weight="bold" fill="#5b7585" text-anchor="start" textLength="42.8" lengthAdjust="spacingAndGlyphs" stroke="#5b7585" stroke-width="0.3">Recorder</text>
<text x="217.70000000000002" y="33.5" font-size="10" font-weight="bold" fill="#5b7585" text-anchor="start" textLength="89.7" lengthAdjust="spacingAndGlyphs" stroke="#5b7585" stroke-width="0.3">Continuous Sweep</text>
<text x="317.09999999999997" y="33.5" font-size="10" font-weight="bold" fill="#5b7585" text-anchor="start" textLength="90" lengthAdjust="spacingAndGlyphs" stroke="#5b7585" stroke-width="0.3">Acoustic Response</text>
<text x="8.8" y="75.5" font-size="12" font-weight="bold" fill="#111" text-anchor="start" textLength="36.5" lengthAdjust="spacingAndGlyphs">Scope</text>
<text x="52" y="74.3" font-size="9.2" fill="#4f5a60" text-anchor="start">X:</text>
<text x="67.2" y="74.5" font-size="9.6" fill="#333" text-anchor="start">s</text>
<text x="125.4" y="74.3" font-size="9.2" fill="#4f5a60" text-anchor="start">Y:</text>
<text x="141.0" y="74.5" font-size="9.6" fill="#333" text-anchor="start">V</text>
<text x="528.8" y="75.5" font-size="12" font-weight="bold" fill="#111" text-anchor="start" textLength="22.5" lengthAdjust="spacingAndGlyphs">FFT</text>
<text x="555.8" y="74.3" font-size="9.2" fill="#4f5a60" text-anchor="start">X:</text>
<text x="570.8" y="74.5" font-size="9.6" fill="#333" text-anchor="start">Hz</text>
<text x="628.4" y="74.3" font-size="9.2" fill="#4f5a60" text-anchor="start">Y:</text>
<text x="643.8" y="74.5" font-size="9.6" fill="#333" text-anchor="start">dBrA</text>
<text x="33.4" y="409.9" font-size="10" fill="#444" text-anchor="end">-14</text>
<text x="33.4" y="388.4" font-size="10" fill="#444" text-anchor="end">-12</text>
<text x="33.4" y="366.9" font-size="10" fill="#444" text-anchor="end">-10</text>
<text x="33.4" y="345.4" font-size="10" fill="#444" text-anchor="end">-8</text>
<text x="33.4" y="323.9" font-size="10" fill="#444" text-anchor="end">-6</text>
<text x="33.4" y="302.4" font-size="10" fill="#444" text-anchor="end">-4</text>
<text x="33.4" y="280.9" font-size="10" fill="#444" text-anchor="end">-2</text>
<text x="33.4" y="259.4" font-size="10" fill="#444" text-anchor="end">0</text>
<text x="33.4" y="237.9" font-size="10" fill="#444" text-anchor="end">2</text>
<text x="33.4" y="216.4" font-size="10" fill="#444" text-anchor="end">4</text>
<text x="33.4" y="194.9" font-size="10" fill="#444" text-anchor="end">6</text>
<text x="33.4" y="173.4" font-size="10" fill="#444" text-anchor="end">8</text>
<text x="33.4" y="151.9" font-size="10" fill="#444" text-anchor="end">10</text>
<text x="33.4" y="130.4" font-size="10" fill="#444" text-anchor="end">12</text>
<text x="33.4" y="108.9" font-size="10" fill="#444" text-anchor="end">14</text>
<text x="37.5" y="429" font-size="10" fill="#444" text-anchor="middle">0</text>
<text x="99.1" y="429" font-size="10" fill="#444" text-anchor="middle">400u</text>
<text x="160.7" y="429" font-size="10" fill="#444" text-anchor="middle">800u</text>
<text x="222.3" y="429" font-size="10" fill="#444" text-anchor="middle">1.2m</text>
<text x="283.9" y="429" font-size="10" fill="#444" text-anchor="middle">1.6m</text>
<text x="345.5" y="429" font-size="10" fill="#444" text-anchor="middle">2.0m</text>
<text x="407.1" y="429" font-size="10" fill="#444" text-anchor="middle">2.4m</text>
<text x="468.7" y="429" font-size="10" fill="#444" text-anchor="middle">2.8m</text>
<text x="268.5" y="438.3" font-size="9.5" fill="#444" text-anchor="middle">Time (s)</text>
<text x="268" y="91.3" font-size="10" fill="#444" text-anchor="middle">Scope</text>
<text x="0" y="0" font-size="9.5" fill="#444" text-anchor="middle" textLength="96" lengthAdjust="spacingAndGlyphs" transform="translate(15.8 255.5) rotate(-90)">Instantaneous Level (V)</text>
<text x="559.5" y="99.2" font-size="10" fill="#444" text-anchor="end">+10</text>
<text x="559.5" y="115.3" font-size="10" fill="#444" text-anchor="end">0</text>
<text x="559.5" y="131.4" font-size="10" fill="#444" text-anchor="end">-10</text>
<text x="559.5" y="147.6" font-size="10" fill="#444" text-anchor="end">-20</text>
<text x="559.5" y="163.7" font-size="10" fill="#444" text-anchor="end">-30</text>
<text x="559.5" y="179.9" font-size="10" fill="#444" text-anchor="end">-40</text>
<text x="559.5" y="196.0" font-size="10" fill="#444" text-anchor="end">-50</text>
<text x="559.5" y="212.1" font-size="10" fill="#444" text-anchor="end">-60</text>
<text x="559.5" y="228.3" font-size="10" fill="#444" text-anchor="end">-70</text>
<text x="559.5" y="244.4" font-size="10" fill="#444" text-anchor="end">-80</text>
<text x="559.5" y="260.6" font-size="10" fill="#444" text-anchor="end">-90</text>
<text x="559.5" y="276.7" font-size="10" fill="#444" text-anchor="end">-100</text>
<text x="559.5" y="292.8" font-size="10" fill="#444" text-anchor="end">-110</text>
<text x="559.5" y="309.0" font-size="10" fill="#444" text-anchor="end">-120</text>
<text x="559.5" y="325.1" font-size="10" fill="#444" text-anchor="end">-130</text>
<text x="559.5" y="341.3" font-size="10" fill="#444" text-anchor="end">-140</text>
<text x="559.5" y="357.4" font-size="10" fill="#444" text-anchor="end">-150</text>
<text x="559.5" y="373.5" font-size="10" fill="#444" text-anchor="end">-160</text>
<text x="559.5" y="389.7" font-size="10" fill="#444" text-anchor="end">-170</text>
<text x="559.5" y="405.8" font-size="10" fill="#444" text-anchor="end">-180</text>
<text x="577.1" y="429" font-size="10" fill="#444" text-anchor="middle">2</text>
<text x="620.3" y="429" font-size="10" fill="#444" text-anchor="middle">5</text>
<text x="653.0" y="429" font-size="10" fill="#444" text-anchor="middle">10</text>
<text x="685.7" y="429" font-size="10" fill="#444" text-anchor="middle">20</text>
<text x="728.9" y="429" font-size="10" fill="#444" text-anchor="middle">50</text>
<text x="761.6" y="429" font-size="10" fill="#444" text-anchor="middle">100</text>
<text x="794.3" y="429" font-size="10" fill="#444" text-anchor="middle">200</text>
<text x="837.5" y="429" font-size="10" fill="#444" text-anchor="middle">500</text>
<text x="870.2" y="429" font-size="10" fill="#444" text-anchor="middle">1k</text>
<text x="902.9" y="429" font-size="10" fill="#444" text-anchor="middle">2k</text>
<text x="946.1" y="429" font-size="10" fill="#444" text-anchor="middle">5k</text>
<text x="978.8" y="429" font-size="10" fill="#444" text-anchor="middle">10k</text>
<text x="1011.5" y="429" font-size="10" fill="#444" text-anchor="middle">20k</text>
<text x="790.8" y="438.3" font-size="9.5" fill="#444" text-anchor="middle">Frequency (Hz)</text>
<text x="791.3" y="91.3" font-size="10" fill="#444" text-anchor="middle">FFT</text>
<text x="0" y="0" font-size="9.5" fill="#444" text-anchor="middle" transform="translate(535.5 255.5) rotate(-90)">Level (dBrA)</text>
<text x="19.6" y="463.9" font-size="10.5" fill="#383838" text-anchor="start" textLength="44.6" lengthAdjust="spacingAndGlyphs">Add Meter</text>
<text x="96.6" y="463.9" font-size="10.5" fill="#383838" text-anchor="start" textLength="67.2" lengthAdjust="spacingAndGlyphs">Save Meter Data</text>
<text x="189.6" y="463.9" font-size="10.5" fill="#383838" text-anchor="start" textLength="36.9" lengthAdjust="spacingAndGlyphs">Regulate</text>
<text x="8.4" y="487.1" font-size="12" font-weight="bold" fill="#151515" text-anchor="start" textLength="62.5" lengthAdjust="spacingAndGlyphs">RMS Level</text>
<text x="79.7" y="486.5" font-size="10" fill="#3a3a3a" text-anchor="start">W</text>
<text x="10.8" y="555.9" font-size="23" fill="#353535" text-anchor="start" textLength="41.5" lengthAdjust="spacingAndGlyphs">Ch1</text>
<text x="367.8" y="550.1" font-size="25.5" fill="#22e622" text-anchor="start" textLength="58" lengthAdjust="spacingAndGlyphs">10.02</text>
<text x="475.9" y="550.1" font-size="25.5" fill="#22e622" text-anchor="start" textLength="24.5" lengthAdjust="spacingAndGlyphs">W</text>
<text x="519.4" y="487.1" font-size="12" font-weight="bold" fill="#151515" text-anchor="start" textLength="80.3" lengthAdjust="spacingAndGlyphs">THD+N Ratio</text>
<text x="608.1" y="486.5" font-size="10" fill="#3a3a3a" text-anchor="start">%</text>
<text x="521.8" y="555.9" font-size="23" fill="#353535" text-anchor="start" textLength="41.5" lengthAdjust="spacingAndGlyphs">Ch1</text>
<text x="842.9" y="550.1" font-size="25.5" fill="#22e622" text-anchor="start" textLength="100" lengthAdjust="spacingAndGlyphs">0.001004</text>
<text x="988.6999999999999" y="550.1" font-size="25.5" fill="#22e622" text-anchor="start" textLength="21.2" lengthAdjust="spacingAndGlyphs">%</text>
<text x="8.4" y="616.3000000000001" font-size="12" font-weight="bold" fill="#151515" text-anchor="start" textLength="62" lengthAdjust="spacingAndGlyphs">Frequency</text>
<text x="80.3" y="615.7" font-size="10" fill="#3a3a3a" text-anchor="start">Hz</text>
<text x="10.8" y="685.1" font-size="23" fill="#353535" text-anchor="start" textLength="41.5" lengthAdjust="spacingAndGlyphs">Ch1</text>
<text x="298.5" y="679.3000000000001" font-size="25.5" fill="#22e622" text-anchor="start" textLength="85.7" lengthAdjust="spacingAndGlyphs">1.00000</text>
<text x="457.7" y="679.3000000000001" font-size="25.5" fill="#22e622" text-anchor="start" textLength="43.0" lengthAdjust="spacingAndGlyphs">kHz</text>
<text x="519.4" y="616.3000000000001" font-size="12" font-weight="bold" fill="#151515" text-anchor="start" textLength="27.8" lengthAdjust="spacingAndGlyphs">Gain</text>
<text x="556" y="615.7" font-size="10" fill="#3a3a3a" text-anchor="start">dB</text>
<text x="521.8" y="685.1" font-size="23" fill="#353535" text-anchor="start" textLength="41.5" lengthAdjust="spacingAndGlyphs">Ch1</text>
<text x="851.8" y="679.3000000000001" font-size="25.5" fill="#22e622" text-anchor="start" textLength="70.3" lengthAdjust="spacingAndGlyphs">19.041</text>
<text x="979.8" y="679.3000000000001" font-size="25.5" fill="#22e622" text-anchor="start" textLength="29.599999999999998" lengthAdjust="spacingAndGlyphs">dB</text></svg>
</body></html>
